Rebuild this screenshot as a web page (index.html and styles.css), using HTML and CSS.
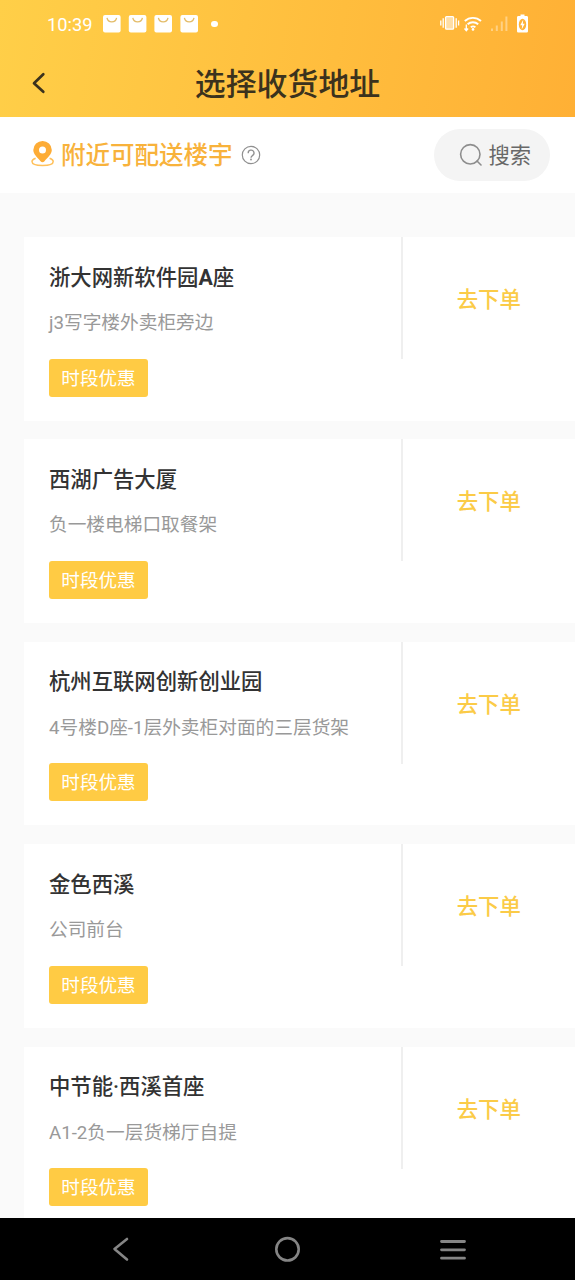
FILE: index.html
```html
<!DOCTYPE html>
<html lang="zh-CN">
<head>
<meta charset="utf-8">
<title>选择收货地址</title>
<link rel="stylesheet" href="styles.css">
</head>
<body>
<div class="screen">
  <header class="header">
    <div class="status">
      <span class="time">10:39</span>
      <svg class="bags" width="108" height="20" viewBox="0 0 108 20">
        <defs>
          <g id="bag"><rect width="17.6" height="17.6" rx="2" fill="#fff"/><path d="M4 2.800a4.900 5 0 0 0 9.600 0" fill="none" stroke="#e3bc69" stroke-width="1.300"/></g>
        </defs>
        <use href="#bag" x="0" y="1"/><use href="#bag" x="25.8" y="1"/><use href="#bag" x="51.4" y="1"/><use href="#bag" x="77.4" y="1"/>
      </svg>
      <i class="dot"></i>
      <svg class="system" width="92" height="24" viewBox="0 0 92 24">
        <g fill="none" stroke="#fff" stroke-width="1.3">
          <rect x="5.6" y="4.600" width="8" height="12.6" rx="1" fill="#fff" fill-opacity=".55"/>
          <path d="M3.2 6.200v9.5M.8 8.400v5M16.2 6.200v9.500M18.6 8.400v5"/>
          <path d="M24.800 9a12 12 0 0 1 16.200 0M27.600 12.200a8 8 0 0 1 10.600 0M30.800 15.200a4 4 0 0 1 4.600 0" stroke-width="1.900"/>
        </g>
        <circle cx="33" cy="17.400" r="1.300" fill="#fff"/>
        <path d="M26.300 12.500v6M24.500 16.500l1.800 2.200 1.800-2.200" fill="none" stroke="#fff" stroke-width="1.300"/>
        <g fill="#fff" opacity=".38"><path d="M51 16.500h2v2.500h-2zM55.800 13.500h2V19h-2zM60.800 9.500h2V19h-2zM65.400 4.500h2V19h-2z"/></g>
        <path d="M78 4h2.500V2.500h4V4H87a1.300 1.300 0 0 1 1 1.300v14a1.300 1.300 0 0 1-1.300 1.300h-8.400a1.300 1.300 0 0 1-1.300-1.300v-14a1.300 1.300 0 0 1 1-1.300z" fill="#fff"/>
        <ellipse cx="82.500" cy="12.500" rx="3.700" ry="5.800" fill="#ffb338"/>
        <path d="M83.300 7.500l-3 5.800h1.900l-.5 4.200 3-5.800h-1.900z" fill="#fff"/>
      </svg>
    </div>
    <div class="nav">
      <svg class="back" width="20" height="26" viewBox="0 0 20 26"><path d="M14.300 4.300L5 13.200l9.300 8.600" fill="none" stroke="#3b321d" stroke-width="2.700" stroke-linecap="round" stroke-linejoin="round"/></svg>
      <h1 class="title">选择收货地址</h1>
    </div>
  </header>

  <section class="toolbar">
    <svg class="pin" width="26" height="28" viewBox="0 0 26 28">
      <path d="M5.600 17.200C3.500 18 2 19.200 2 20.500c0 2.500 4.500 4 10.500 4s10.700-1.500 10.700-4c0-1.300-1.500-2.500-3.600-3.300" fill="none" stroke="#ffc15c" stroke-width="1.500"/>
      <path fill-rule="evenodd" d="M12.500 0a9.200 9.200 0 0 1 9.300 9c0 4.500-4.300 7.300-7.300 11.200q-2 2-4 0C7.500 16.300 3.300 13.500 3.300 9a9.200 9.200 0 0 1 9.200-9zm0 5.500a3.500 3.500 0 1 0 0 7 3.500 3.500 0 0 0 0-7z" fill="#fdac36"/>
    </svg>
    <h2 class="nearby">附近可配送楼宇</h2>
    <svg class="help" width="20" height="20" viewBox="0 0 20 20"><g fill="none" stroke="#909090" stroke-width="1.200"><circle cx="10" cy="10" r="8.700"/><path d="M7.200 8.200a2.900 2.900 0 1 1 4.500 2.200c-1.200.8-1.700 1.200-1.700 2.300" stroke-width="1.300"/></g><circle cx="10" cy="14.500" r=".9" fill="#909090"/></svg>
    <div class="search">
      <svg width="24" height="24" viewBox="0 0 24 24"><g fill="none" stroke="#8d8d8d" stroke-width="1.600"><circle cx="11.300" cy="11.300" r="9.700"/><path d="M18 18l4 4" stroke-linecap="round"/></g></svg>
      <span class="search-label">搜索</span>
    </div>
  </section>

  <main class="list">
    <article class="card"><div class="info"><h3 class="name">浙大网新软件园<b>A</b>座</h3><p class="desc">j3写字楼外卖柜旁边</p><span class="tag">时段优惠</span></div><div class="order">去下单</div></article>
    <article class="card"><div class="info"><h3 class="name">西湖广告大厦</h3><p class="desc">负一楼电梯口取餐架</p><span class="tag">时段优惠</span></div><div class="order">去下单</div></article>
    <article class="card"><div class="info"><h3 class="name">杭州互联网创新创业园</h3><p class="desc">4号楼D座-1层外卖柜对面的三层货架</p><span class="tag">时段优惠</span></div><div class="order">去下单</div></article>
    <article class="card"><div class="info"><h3 class="name">金色西溪</h3><p class="desc">公司前台</p><span class="tag">时段优惠</span></div><div class="order">去下单</div></article>
    <article class="card"><div class="info"><h3 class="name">中节能·西溪首座</h3><p class="desc">A1-2负一层货梯厅自提</p><span class="tag">时段优惠</span></div><div class="order">去下单</div></article>
  </main>

  <footer class="system-nav">
    <svg width="24" height="28" viewBox="0 0 24 28"><path d="M18 4L5.500 14 18 24.500" fill="none" stroke="#858585" stroke-width="2.600" stroke-linecap="round" stroke-linejoin="round"/></svg>
    <svg width="28" height="28" viewBox="0 0 28 28"><circle cx="15.500" cy="14.300" r="11.200" fill="none" stroke="#858585" stroke-width="2.600"/></svg>
    <svg width="28" height="28" viewBox="0 0 28 28"><path d="M2.500 6.500h23M2.500 14.800h23M2.500 23.200h23" fill="none" stroke="#858585" stroke-width="2.800" stroke-linecap="round"/></svg>
  </footer>
</div>
</body>
</html>
```
FILE: styles.css
```css
* { box-sizing: border-box; }
body { margin: 0; font-family: Roboto, "Noto Sans CJK SC", sans-serif; }
h1, h2, h3, p { margin: 0; }
svg { display: block; flex: none; }
.screen { width: 575px; height: 1280px; display: flex; flex-direction: column; overflow: hidden; background: #fafafa; }
.header { height: 116.5px; flex: none; background: linear-gradient(100deg, #ffcf48 0%, #ffb035 100%); }
.status { height: 48px; display: flex; align-items: center; padding: 0 43px 0 47px; color: #fff; }
.time { width: 56px; padding-top: 1px; font-size: 18.3px; line-height: 24px; }
.dot { width: 6.5px; height: 6.5px; border-radius: 50%; background: #fff; }
.system { margin-left: auto; }
.nav { height: 68px; display: grid; grid-template-columns: 60px 1fr 60px; align-items: center; }
.back { margin: 1px 0 0 29px; }
.title { padding-top: 5px; text-align: center; color: #3b321d; font-size: 30.9px; line-height: 44px; font-weight: 500; }
.toolbar { height: 76.5px; flex: none; display: flex; align-items: center; padding: 0 25px 0 30px; background: #fff; }
.nearby { margin-left: 5px; padding-top: 3px; font-size: 24.5px; line-height: 36px; font-weight: 500; color: #f8b23b; }
.help { margin-left: 8px; }
.search { margin-left: auto; width: 116.5px; height: 52px; border-radius: 26px; padding-left: 25px; display: flex; align-items: center; gap: 6px; background: #f4f4f4; color: #686868; font-size: 21.3px; line-height: 32px; }
.search-label { padding-top: 2px; }
.list { flex: 1; min-height: 0; overflow: hidden; padding: 44px 0 0 24px; display: flex; flex-direction: column; gap: 18.9px; }
.card { height: 183.5px; flex: none; display: grid; grid-template-columns: 376.5px 1fr; background: #fff; }
.info { padding: 24.5px 0 0 25px; white-space: nowrap; }
.name { font-size: 21.35px; line-height: 32px; font-weight: 500; color: #333; }
.desc { margin-top: 15.5px; font-size: 18.7px; line-height: 28px; color: #999; }
.tag { display: block; width: 99px; height: 38px; margin-top: 21.5px; padding-top: 1px; border-radius: 3px; background: #ffcb44; color: #fff; font-size: 18.6px; line-height: 38px; text-align: center; }
.order { height: 122px; padding-bottom: 1px; border-left: 2px solid #efefef; display: flex; align-items: center; justify-content: center; font-size: 21.4px; font-weight: 500; color: #fbcb47; }
.system-nav { height: 62px; flex: none; display: flex; align-items: center; justify-content: space-between; padding: 0 108px 0 109px; background: #000; }
```
